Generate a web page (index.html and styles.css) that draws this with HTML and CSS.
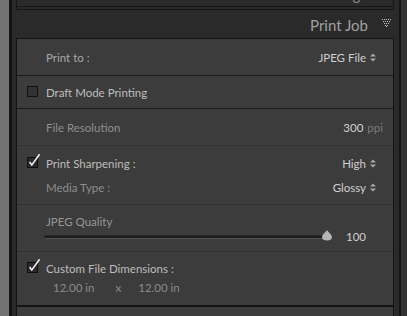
FILE: index.html
```html
<!DOCTYPE html>
<html lang="en">
<head>
  <meta charset="UTF-8" />
  <title>Print Job</title>
  <link rel="stylesheet" href="styles.css">
</head>
<body>

  <div class="edge-left"></div>

  <div class="panel">
    <div class="prev">
      <div class="prev-text"><span>Page</span></div>
    </div>

    <div class="panel-head">
      <span class="title">Print Job</span>
      <svg class="tri" width="9" height="8" viewBox="0 0 9 8">
        <g fill="#c4c4c4">
          <rect x="0" y="0" width="1" height="1"/><rect x="2" y="0" width="1" height="1"/><rect x="4" y="0" width="1" height="1"/><rect x="6" y="0" width="1" height="1"/><rect x="8" y="0" width="1" height="1"/>
          <rect x="1" y="2" width="1" height="1"/><rect x="3" y="2" width="1" height="1"/><rect x="5" y="2" width="1" height="1"/><rect x="7" y="2" width="1" height="1"/>
          <rect x="2" y="4" width="1" height="1"/><rect x="4" y="4" width="1" height="1"/><rect x="6" y="4" width="1" height="1"/>
          <rect x="3" y="6" width="1" height="1"/><rect x="5" y="6" width="1" height="1"/>
          <rect x="4" y="7" width="1" height="1"/>
        </g>
      </svg>
    </div>

    <div class="box">
      <div class="row r1">
        <span class="label">Print to :</span>
        <span class="value">JPEG File <svg class="updown" width="6" height="9" viewBox="0 0 6 9"><path d="M0 3.5 L3 0.5 L6 3.5 Z M0 5.5 L3 8.5 L6 5.5 Z" fill="#a8a8a8"/></svg></span>
      </div>

      <div class="row r2">
        <svg class="check" width="15" height="15" viewBox="0 0 15 15"><rect x="0.5" y="4.5" width="10" height="10" fill="#333" stroke="#111"/></svg>
        <span class="label on">Draft Mode Printing</span>
      </div>

      <div class="row r3">
        <span class="label dim">File Resolution</span>
        <span class="value"><b>300</b> <i>ppi</i></span>
      </div>

      <div class="r4">
        <div class="line">
          <svg class="check" width="15" height="15" viewBox="0 0 15 15">
            <rect x="0.5" y="4.5" width="10" height="10" fill="#2a2a2a" stroke="#0e0e0e"/>
            <path d="M2.6 9 L4.8 12 L12.6 1.2" fill="none" stroke="#eeeeee" stroke-width="1.6"/>
          </svg>
          <span class="label on">Print Sharpening :</span>
          <span class="value">High <svg class="updown" width="6" height="9" viewBox="0 0 6 9"><path d="M0 3.5 L3 0.5 L6 3.5 Z M0 5.5 L3 8.5 L6 5.5 Z" fill="#a8a8a8"/></svg></span>
        </div>
        <div class="line sub">
          <span class="label dim">Media Type :</span>
          <span class="value">Glossy <svg class="updown" width="6" height="9" viewBox="0 0 6 9"><path d="M0 3.5 L3 0.5 L6 3.5 Z M0 5.5 L3 8.5 L6 5.5 Z" fill="#a8a8a8"/></svg></span>
        </div>
      </div>

      <div class="r5">
        <div class="q-label">JPEG Quality</div>
        <div class="slider-row">
          <div class="track">
            <svg class="thumb" width="10" height="11" viewBox="0 0 10 11"><path d="M5 0 C6 2 10 4.5 10 7 C10 9.5 8 10.5 5 10.5 C2 10.5 0 9.5 0 7 C0 4.5 4 2 5 0 Z" fill="#b4b4b4"/></svg>
          </div>
          <span class="q-value">100</span>
        </div>
      </div>

      <div class="r6">
        <div class="line">
          <svg class="check" width="15" height="15" viewBox="0 0 15 15">
            <rect x="0.5" y="4.5" width="10" height="10" fill="#2a2a2a" stroke="#0e0e0e"/>
            <path d="M2.6 9 L4.8 12 L12.6 1.2" fill="none" stroke="#eeeeee" stroke-width="1.6"/>
          </svg>
          <span class="label on">Custom File Dimensions :</span>
        </div>
        <div class="dims">
          <span>12.00 in</span><span class="x">x</span><span>12.00 in</span>
        </div>
      </div>
    </div>

    <div class="box next"></div>
  </div>

  <div class="edge-right"></div>

</body>
</html>
```
FILE: styles.css
```css
body {
  margin: 0;
  height: 316px;
  overflow: hidden;
  display: flex;
  background-color: #2a2a2a;
  font-family: Lato, "Open Sans", sans-serif;
  font-size: 11.5px;
  color: #a8a8a8;
}
.edge-left {
  width: 9px;
  background-color: #737373;
  border-right: 3px solid #141414;
}
.edge-right {
  width: 6px;
  background-color: #333;
  border-left: 2px solid #141414;
}
.panel {
  flex: 1;
  padding: 0 5px 0 4px;
  background-color: #2a2a2a;
}
.prev {
  height: 7px;
  padding-bottom: 2px;
  border: 1px solid #161616;
  border-top: none;
}
.prev-text {
  height: 6px;
  overflow: hidden;
  border-bottom: 1px solid #161616;
  text-align: right;
  padding-right: 25px;
  font-size: 15px;
  line-height: 15px;
  color: #8a8a8a;
}
.prev-text span {
  display: block;
  margin-top: -13px;
}
.panel-head {
  height: 28px;
  display: flex;
  justify-content: flex-end;
  align-items: center;
  padding: 1px 3px 0 0;
  margin-right: 0;
  box-sizing: border-box;
}
.title {
  font-size: 15px;
  color: #a0a0a0;
  margin-right: 14px;
}
.tri {
  margin-top: -3px;
}
.box {
  border: 1px solid #141414;
  background-color: #3c3c3c;
}
.row {
  display: flex;
  align-items: center;
  justify-content: space-between;
}
.r1 {
  height: 36px;
  padding: 0 17px 0 29px;
  border-bottom: 1px solid #1a1a1a;
}
.r2 {
  height: 32px;
  justify-content: flex-start;
  padding-left: 10px;
  border-bottom: 1px solid #1a1a1a;
}
.r3 {
  height: 36px;
  padding: 0 10px 0 29px;
  border-bottom: 1px solid #333;
}
.r4 {
  height: 59px;
  padding: 5px 17px 0 10px;
  box-sizing: border-box;
  border-bottom: 1px solid #333;
}
.r5 {
  height: 47px;
  padding: 7px 0 0 27px;
  box-sizing: border-box;
  border-bottom: 1px solid #333;
}
.r6 {
  height: 53px;
  padding: 6px 0 0 10px;
  box-sizing: border-box;
}
.line {
  display: flex;
  align-items: center;
  height: 24px;
}
.line .value {
  margin-left: auto;
}
.line.sub {
  padding-left: 19px;
}
.r6 .line {
  height: 20px;
}
.check {
  margin: -5px 4px 0 0;
  flex-shrink: 0;
}
.label.on {
  color: #bdbdbd;
}
.label.dim {
  color: #8e8e8e;
}
.value {
  color: #cfcfcf;
  display: flex;
  align-items: center;
}
.updown {
  margin-left: 4px;
}
.value b {
  font-weight: normal;
  color: #d2d2d2;
}
.value i {
  font-style: normal;
  color: #7a7a7a;
  margin-left: 4px;
}
.q-label {
  height: 20px;
  line-height: 20px;
  color: #969696;
  padding-left: 2px;
}
.slider-row {
  display: flex;
  align-items: center;
  height: 9px;
}
.track {
  position: relative;
  width: 286px;
  height: 2px;
  background-color: #1c1c1c;
  border: 1px solid #2a2a2a;
  border-bottom-color: #555;
  border-radius: 2px;
}
.thumb {
  position: absolute;
  right: -1px;
  top: -6px;
}
.q-value {
  margin-left: 14px;
  color: #d0d0d0;
}
.dims {
  height: 20px;
  line-height: 20px;
  padding-left: 26px;
  color: #8a8a8a;
}
.dims .x {
  margin: 0 17px 0 21px;
}
.next {
  height: 20px;
  border-bottom: none;
}
```
